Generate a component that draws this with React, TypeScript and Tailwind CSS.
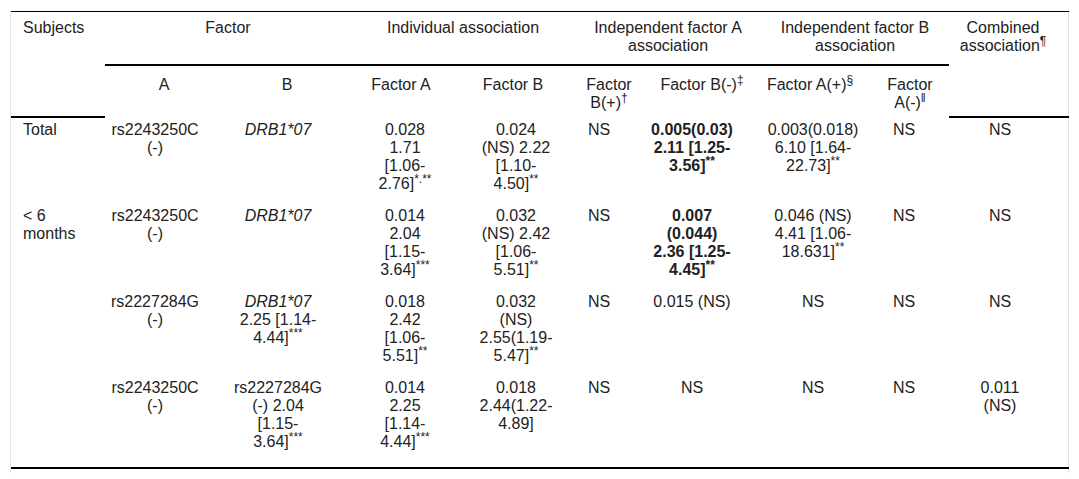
import React from 'react';

type Cell = {
  lines: React.ReactNode[];
  bold?: boolean;
  italic?: boolean;
};

const L = (...lines: React.ReactNode[]): Cell => ({ lines });

// one data row = subject + 9 value cells
const rows: { subject: string[]; cells: Cell[] }[] = [
  {
    subject: ['Total'],
    cells: [
      L('rs2243250C', '(-)'),
      { lines: ['DRB1*07'], italic: true },
      L('0.028', '1.71', '[1.06-', <>2.76]<sup>*.**</sup></>),
      L('0.024', '(NS) 2.22', '[1.10-', <>4.50]<sup>**</sup></>),
      L('NS'),
      { lines: ['0.005(0.03)', '2.11 [1.25-', <>3.56]<sup>**</sup></>], bold: true },
      L('0.003(0.018)', '6.10 [1.64-', <>22.73]<sup>**</sup></>),
      L('NS'),
      L('NS'),
    ],
  },
  {
    subject: ['< 6', 'months'],
    cells: [
      L('rs2243250C', '(-)'),
      { lines: ['DRB1*07'], italic: true },
      L('0.014', '2.04', '[1.15-', <>3.64]<sup>***</sup></>),
      L('0.032', '(NS) 2.42', '[1.06-', <>5.51]<sup>**</sup></>),
      L('NS'),
      { lines: ['0.007', '(0.044)', '2.36 [1.25-', <>4.45]<sup>**</sup></>], bold: true },
      L('0.046 (NS)', '4.41 [1.06-', <>18.631]<sup>**</sup></>),
      L('NS'),
      L('NS'),
    ],
  },
  {
    subject: [],
    cells: [
      L('rs2227284G', '(-)'),
      L(<i>DRB1*07</i>, '2.25 [1.14-', <>4.44]<sup>***</sup></>),
      L('0.018', '2.42', '[1.06-', <>5.51]<sup>**</sup></>),
      L('0.032', '(NS)', '2.55(1.19-', <>5.47]<sup>**</sup></>),
      L('NS'),
      L('0.015 (NS)'),
      L('NS'),
      L('NS'),
      L('NS'),
    ],
  },
  {
    subject: [],
    cells: [
      L('rs2243250C', '(-)'),
      L('rs2227284G', '(-) 2.04', '[1.15-', <>3.64]<sup>***</sup></>),
      L('0.014', '2.25', '[1.14-', <>4.44]<sup>***</sup></>),
      L('0.018', '2.44(1.22-', '4.89]'),
      L('NS'),
      L('NS'),
      L('NS'),
      L('NS'),
      L('0.011', '(NS)'),
    ],
  },
];

const colWidths = [94, 118, 128, 100, 124, 68, 118, 98, 90, 120];

// data cells sit a little off the header centres in the source table
const dataPad = [
  'pr-[18px]',
  'pr-[18px]',
  'pl-2',
  'pl-1.5',
  'pr-5',
  'pr-5',
  'pl-1.5',
  'pl-0',
  'pr-[18px]',
];

const Lines = ({ lines }: { lines: React.ReactNode[] }) => (
  <>
    {lines.map((l, i) => (
      <div key={i} className="whitespace-nowrap">
        {l}
      </div>
    ))}
  </>
);

export default function App() {
  return (
    <div className="bg-white w-[1079px] h-[479px] pt-[11px] pl-[10px] font-['Liberation_Sans',Arial,sans-serif] text-[16px] leading-[18px] text-[#222]">
      <div className="w-[1059px] border-l border-r border-[#e3e3e3] pb-[4px]">
        <table className="table-fixed border-separate border-spacing-0 w-[1058px] border-t border-black">
          <colgroup>
            {colWidths.map((w, i) => (
              <col key={i} style={{ width: w }} />
            ))}
          </colgroup>
          <thead>
            <tr className="align-top">
              <th rowSpan={2} className="font-normal text-left pl-3 pt-[7px] border-b-2 border-black">
                Subjects
              </th>
              <th colSpan={2} className="font-normal text-center pt-[7px] pb-[9px] border-b-2 border-black">
                Factor
              </th>
              <th colSpan={2} className="font-normal text-center pt-[7px] pb-[9px] border-b-2 border-black">
                Individual association
              </th>
              <th colSpan={2} className="font-normal text-center pt-[7px] pb-[9px] border-b-2 border-black">
                Independent factor A
                <br />
                association
              </th>
              <th colSpan={2} className="font-normal text-center pt-[7px] pb-[9px] border-b-2 border-black">
                Independent factor B
                <br />
                association
              </th>
              <th rowSpan={2} className="font-normal text-center pt-[7px] pr-3 border-b-2 border-black">
                Combined
                <br />
                association<sup>¶</sup>
              </th>
            </tr>
            <tr className="align-top">
              <th className="font-normal text-center pt-[10px] pb-[6px]">A</th>
              <th className="font-normal text-center pt-[10px] pb-[6px]">B</th>
              <th className="font-normal text-center pt-[10px] pb-[6px]">Factor A</th>
              <th className="font-normal text-center pt-[10px] pb-[6px]">Factor B</th>
              <th className="font-normal text-center pt-[10px] pb-[6px]">
                Factor
                <br />
                B(+)<sup>†</sup>
              </th>
              <th className="font-normal text-center pt-[10px] pb-[6px]">
                Factor B(-)<sup>‡</sup>
              </th>
              <th className="font-normal text-center pt-[10px] pb-[6px]">
                Factor A(+)<sup>§</sup>
              </th>
              <th className="font-normal text-center pt-[10px] pb-[6px] pl-3">
                Factor
                <br />
                A(-)<sup>‖</sup>
              </th>
            </tr>
          </thead>
          <tbody>
            {rows.map((row, r) => (
              <tr key={r} className="align-top">
                <td className={`pl-3 pt-[3px] ${r === rows.length - 1 ? 'pb-[16px] border-b-2 border-black' : 'pb-[11px]'}`}>
                  <Lines lines={row.subject} />
                </td>
                {row.cells.map((c, i) => (
                  <td
                    key={i}
                    className={`text-center pt-[3px] ${dataPad[i]} ${
                      r === rows.length - 1 ? 'pb-[16px] border-b-2 border-black' : 'pb-[11px]'
                    } ${c.bold ? 'font-bold' : ''} ${c.italic ? 'italic' : ''}`}
                  >
                    <Lines lines={c.lines} />
                  </td>
                ))}
              </tr>
            ))}
          </tbody>
        </table>
      </div>
    </div>
  );
}
